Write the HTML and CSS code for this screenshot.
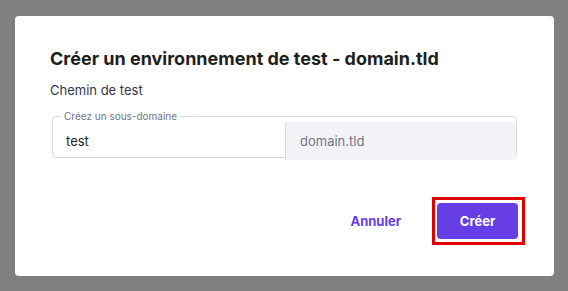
FILE: index.html
```html
<!DOCTYPE html>
<html lang="fr">
<head>
	<meta charset="UTF-8">
	<title>Créer un environnement de test</title>
	<link rel="stylesheet" href="styles.css">
</head>
<body>
	<div class="modal">
		<h2 class="title">Créer un environnement de test - domain.tld</h2>
		<p class="subtitle">Chemin de test</p>
		<fieldset class="field">
			<legend>Créez un sous-domaine</legend>
			<div class="sub">test</div>
			<div class="domain">domain.tld</div>
		</fieldset>
		<div class="actions">
			<a href="javascript:void(0);" class="cancel">Annuler</a>
			<div class="mark">
				<a href="javascript:void(0);" class="create">Créer</a>
			</div>
		</div>
	</div>
</body>
</html>
```

FILE: styles.css
```css
*{
	box-sizing: border-box;
}
body{
	margin: 0;
	height: 291px;
	background: #808080;
	padding: 16px 14px 15px 15px;
	font-family: Inter, 'Noto Sans', sans-serif;
}
.modal{
	height: 260px;
	background: #fff;
	border-radius: 4px;
	padding: 31px 29px 0 35px;
	display: flex;
	flex-direction: column;
}
.title{
	margin: 0;
	font-size: 18px;
	line-height: 24px;
	font-weight: 700;
	color: #1d1e20;
}
.subtitle{
	margin: 9px 0 0;
	font-size: 13px;
	line-height: 20px;
	color: #36344d;
}
.field{
	margin: 10px 8px 0 2px;
	padding: 0;
	border: 1px solid #d8dae0;
	border-radius: 4px;
	display: flex;
	height: 48px;
	min-width: 0;
}
.field legend{
	margin-left: 8px;
	padding: 0 3px;
	font-size: 10px;
	line-height: 12px;
	color: #727586;
}
.sub{
	width: 233px;
	padding-left: 13px;
	line-height: 38px;
	font-size: 13px;
	color: #1d1e20;
	border-right: 1px solid #dadce0;
}
.domain{
	flex: 1;
	background: #f2f3f6;
	padding-left: 14px;
	line-height: 38px;
	font-size: 13px;
	color: #727586;
	border-radius: 0 3px 3px 0;
}
.actions{
	margin-top: 39px;
	display: flex;
	justify-content: flex-end;
	align-items: center;
}
.cancel{
	color: #673de6;
	font-size: 13px;
	font-weight: 700;
	text-decoration: none;
	margin-right: 31px;
}
.mark{
	border: 3px solid #e00000;
	padding: 3px 4px 3px 2px;
}
.create{
	display: block;
	width: 81px;
	height: 36px;
	line-height: 36px;
	text-align: center;
	background: #673de6;
	color: #fff;
	font-size: 13px;
	font-weight: 700;
	border-radius: 4px;
	text-decoration: none;
}
```
